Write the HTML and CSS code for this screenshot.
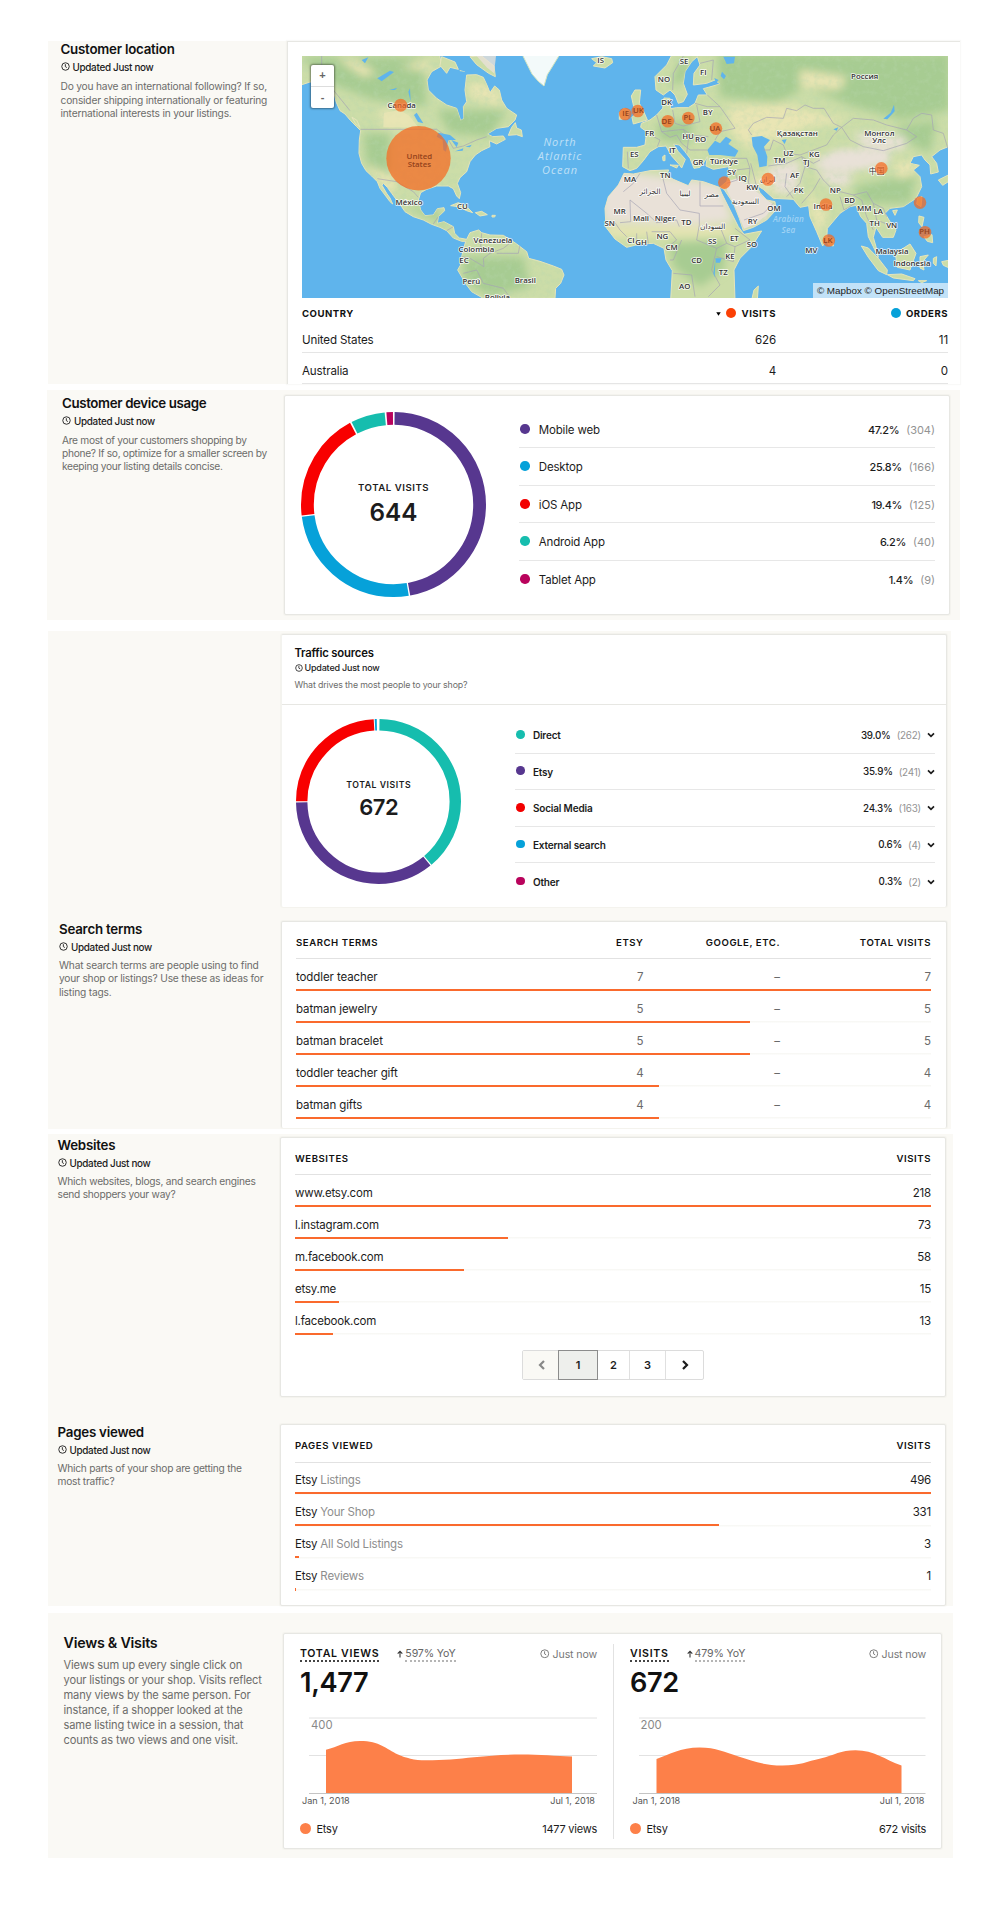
FILE: index.html
```html
<!DOCTYPE html>
<html lang="en">
<head>
<meta charset="utf-8">
<title>Shop stats</title>
<link rel="stylesheet" href="styles.css">
</head>
<body>
<svg class="defs" width="0" height="0" aria-hidden="true">
  <symbol id="clock" viewBox="0 0 12 12"><circle cx="6" cy="6" r="5" fill="none" stroke="currentColor" stroke-width="1.2"/><path d="M5.8 2.9V6.2L7.8 7.4" fill="none" stroke="currentColor" stroke-width="1.2"/></symbol>
  <symbol id="down" viewBox="0 0 8 6"><path d="M1 1.3L4 4.3L7 1.3" fill="none" stroke="currentColor" stroke-width="1.7"/></symbol>
  <symbol id="up" viewBox="0 0 6 8"><path d="M3 7.4V1.4M.7 3.6L3 1.3L5.3 3.6" fill="none" stroke="currentColor" stroke-width="1.1"/></symbol>
</svg>

<section class="panel location">
  <div class="side">
    <h2>Customer location</h2>
    <p class="updated"><svg><use href="#clock"/></svg>Updated Just now</p>
    <p class="about">Do you have an international following? If so,<br>consider shipping internationally or featuring<br>international interests in your listings.</p>
  </div>
  <div class="card">
    <div class="map">
      <svg viewBox="302 56 646 241.5" preserveAspectRatio="none">
        <defs>
          <path id="americas" d="M20 40L20 128L36 134L60 126L90 128L130 150L138 185L150 212L165 222L182 242L200 260L212 272L208 300L207 340L215 370L228 392L245 408L262 425L270 445L285 465L300 485L308 492L300 474L290 460L276 436L280 430L292 442L305 460L320 480L335 500L345 515L370 530L400 540L425 553L450 562L470 572L490 594L515 604L527 604L520 630L515 650L511 676L503 690L516 712L530 735L545 755L580 775L795 775L797 745L812 730L822 705L815 688L790 678L750 664L716 655L710 635L680 612L665 602L640 586L600 585L575 578L566 570L540 578L530 598L508 594L494 580L490 560L462 545L442 550L445 530L464 512L462 503L442 506L430 525L405 527L392 510L385 480L392 458L410 448L440 438L475 438L490 446L500 468L508 476L512 458L502 430L510 413L530 395L540 365L556 345L575 332L600 320L598 302L620 312L646 298L640 288L608 290L592 282L620 265L655 260L675 240L680 225L650 205L635 180L628 150L614 138L600 158L592 138L580 112L560 104L530 105L525 150L530 185L520 200L522 235L512 242L500 205L470 195L440 175L415 150L411 120L425 95L455 78L448 40Z"/>
          <path id="oldworld" d="M158 40L140 75L105 110L108 150L130 165L150 150L165 165L175 190L190 185L202 163L190 130L195 95L215 65L232 50L240 75L222 100L220 135L260 130L285 120L300 132L265 142L250 146L262 165L235 165L225 190L205 203L170 203L152 206L150 175L132 174L128 205L110 225L90 240L64 250L62 262L80 275L75 315L50 322L10 322L8 380L30 392L50 385L70 362L90 335L115 320L138 318L155 348L178 374L185 384L196 358L175 335L160 312L178 315L195 335L210 355L222 385L240 382L250 370L262 350L258 378L280 388L325 380L330 395L320 425L300 442L312 448L340 490L358 535L370 572L400 562L440 540L468 510L465 485L440 480L420 458L410 436L430 448L460 475L520 478L540 502L566 497L570 530L590 575L608 618L620 600L622 565L660 520L690 500L708 496L722 530L740 550L745 590L760 620L775 652L768 620L760 592L768 562L788 592L820 592L828 570L810 545L795 520L810 505L850 500L888 475L905 440L900 410L880 390L898 376L870 370L880 350L905 345L915 360L930 375L932 402L955 396L950 370L935 350L960 330L990 318L990 40Z"/>
          <path id="africa" d="M12 400L-5 435L-35 470L-45 505L-42 562L-15 597L20 622L60 612L100 610L132 625L138 660L157 692L152 780L345 780L342 690L360 655L395 620L425 573L372 583L355 560L330 510L305 460L298 442L250 425L215 420L205 437L160 418L140 405L146 390L90 392L40 402Z"/>
          <clipPath id="clip-a"><use href="#americas"/></clipPath>
          <clipPath id="clip-e"><use href="#oldworld"/></clipPath>
          <clipPath id="clip-f"><use href="#africa"/></clipPath>
          <filter id="soft" x="-20%" y="-20%" width="140%" height="140%"><feGaussianBlur stdDeviation="12"/></filter>
          <filter id="relief" x="0" y="0" width="100%" height="100%"><feTurbulence type="fractalNoise" baseFrequency=".06" numOctaves="4" seed="8"/><feColorMatrix values="0 0 0 0 .48  0 0 0 0 .68  0 0 0 0 .42  2.2 0 0 0 -.95"/></filter>
        </defs>
        <rect class="water" x="302" y="56" width="646" height="242"/>

        <g transform="translate(290 40) scale(.33333)">
          <use href="#americas" class="land"/>
          <g clip-path="url(#clip-a)">
            <g filter="url(#soft)">
              <path class="forest" d="M30 50L400 50L410 200L250 180L120 130Z M440 210L650 210L600 290L480 280Z M220 280L300 280L300 400L230 380Z"/>
              <path class="pale" d="M140 55L200 60L260 100L220 110Z M270 210L360 215L380 262L280 262Z M540 120L620 150L640 200L540 170Z M330 80L400 60L430 95Z M230 370L320 420L300 470Z"/>
              <path class="forest" d="M520 650L700 650L720 740L600 770L520 720Z M340 500L420 530L480 570L430 500Z"/>
            </g>
            <rect x="36" y="48" width="800" height="725" filter="url(#relief)" opacity=".4"/>
            <path class="pale" d="M282 218L330 210L358 228L385 262L280 262Z" opacity=".8"/>
            <path class="border" d="M95 48V80L130 150L180 212 M212 268H440L470 290L490 325L520 318L560 300L590 290 M262 416L320 425L345 440L370 455L385 472 M430 552L445 530 M470 572L490 560 M575 580L572 620L600 640L580 655L582 680L540 655L515 650 M600 640L640 625L665 605 M690 612L685 640L620 640 M520 700L560 690L580 730L640 745L660 772"/>
          </g>
          <path class="land" d="M655 286L665 262L676 248L680 264L694 270L697 290L680 284Z M482 497L505 488L530 500L548 518L530 512L505 500Z M556 518L575 514L592 524L570 528Z M606 526h10l-2 5h-8Z M540 50L575 48L612 78L616 110L596 100L560 74Z M455 50L495 66L505 88L480 82L470 100L450 76Z M510 92L525 96L518 108Z M186 232L200 240L210 262L196 250Z"/>
          <path class="dry" d="M560 48H618L612 100L590 82Z" opacity=".8"/>
          <path class="lake" d="M262 115L300 92L312 96L275 124Z M298 150L322 143L315 150Z M355 155L360 145L362 185Z M372 225L380 218L400 250L384 246Z M215 60L235 52L225 70Z M445 278L480 285L498 300L475 300L468 335L460 330L458 300L440 290Z M484 300L505 308L500 322Z M495 334L520 325L518 332Z M526 320L545 314L540 322Z M500 92L530 96L520 118Z"/>
          <path class="ice" d="M696 42L726 102L745 124L762 138L772 104L790 75L810 42Z"/>
          <path class="land" d="M905 56L935 50L965 56L968 68L945 84L910 78L920 68Z"/>
        </g>

        <g transform="translate(620 40) scale(.33333)">
          <use href="#oldworld" class="land"/>
          <use href="#africa" class="land"/>
          <g clip-path="url(#clip-e)">
            <g filter="url(#soft)">
              <path class="forest" d="M290 40L990 40L990 210L850 240L700 200L560 140L470 190L300 170Z M830 260L950 240L930 340L850 300Z M700 440L890 400L870 490L720 490Z"/>
              <path class="pale" d="M320 200L480 190L640 230L700 240L560 260L400 330L340 290Z M540 90L680 110L660 150L540 140Z M560 450L620 520L600 600L570 500Z M400 400L520 400L500 470L410 440Z"/>
              <path class="forest" d="M180 60L210 60L200 120L150 140Z M110 250L220 240L210 310L120 300Z"/>
              <path class="dry" d="M570 370L660 330L810 330L800 370L680 390Z M700 280L860 290L850 330L730 320Z M310 440L400 430L460 500L440 540L370 560Z M440 380L540 360L530 460L470 460Z M590 390L700 400L680 440L620 430Z"/>
              <path class="pale" d="M820 370L890 360L890 400L840 420Z"/>
            </g>
            <rect x="0" y="48" width="985" height="600" filter="url(#relief)" opacity=".35"/>
            <g filter="url(#soft)"><path class="dry" d="M585 375L650 340L800 335L800 365L700 385L620 392Z"/></g>
            <path class="dry" d="M318 425L352 415L390 440L415 460L438 478L462 495L440 525L400 555L372 566L350 510L322 452Z"/>
          </g>
          <g clip-path="url(#clip-f)">
            <g filter="url(#soft)">
              <path class="dry" d="M-60 420L20 395L300 430L340 545L230 555L-50 548Z"/>
              <path class="forest" d="M150 610L320 600L310 690L240 740L160 680Z"/>
              <path class="pale" d="M-40 560L340 560L340 585L-40 590Z"/>
            </g>
            <path class="border" d="M30 480L32 545L0 548 M30 480L80 520L110 548 M60 400L40 430L10 455 M125 400L140 460L180 510L238 520 M240 425V498H310 M238 520V555L230 600 M110 548L170 540L178 560 M-40 545L-15 548L0 570L20 590 M50 580V612 M80 575L85 612 M95 575L150 575L170 600L145 620 M230 600L290 625L320 610L300 560 M185 600L160 660H150 M290 625L275 690L300 735L265 770 M160 700L215 705L225 770 M320 610L345 620L340 665L290 650 M345 620L390 600L345 565"/>
          </g>
          <path class="land" d="M40 252L82 240L70 212L58 190L62 150L45 150L34 168L40 195L48 220L36 232Z M-2 238L22 236L28 212L12 205L-2 218Z M128 350L135 345V362H129Z M150 375L175 376L170 384Z M622 592L640 596L640 618L624 614Z M893 474L906 470L903 500L890 492Z M897 528L912 532L906 560L896 548Z M912 590L936 584L938 608L922 604Z M724 618L745 624L775 655L802 690L800 704L775 692L745 652Z M802 704L845 702L885 716L880 722L820 714Z M826 640L870 612L888 640L870 690L832 682Z M900 650L925 645L908 665L912 690L900 684Z M395 780L402 750L415 738L412 780Z M818 512L832 510L825 526Z M955 420L985 405V425L968 436Z M895 722H920L905 728Z M940 655L950 650L948 678L940 670Z M965 665L990 660V685L970 676Z"/>
          <path class="lake" d="M262 330L285 302L300 310L318 290L335 300L325 312L355 332L345 350L300 345L268 345Z M395 292L425 288L450 300L432 320L442 350L440 378L418 382L412 345L398 318Z M485 300L500 298L494 312Z M790 236L812 218L822 194L824 214L802 238Z M283 114L296 120L288 130Z M306 95L318 108L312 118L302 108Z M310 50L345 50L342 70L320 72Z M286 655L305 655L300 668L288 668Z M286 660L280 700L284 712Z M640 268L655 262L650 272Z"/>
          <path class="border" d="M190 48L160 100L158 150 M240 70L280 60L275 120 M262 165L300 200L345 265L300 275L285 300 M225 190L262 200L300 200 M158 210L165 250L190 258L240 245L230 195 M110 225L125 275L190 268L215 285L265 290 M78 278L120 300L112 320 M125 275L150 292L170 285L185 310L210 330L262 330 M190 268L205 300L200 340 M22 335L25 385 M335 355L380 355L390 385L330 392 M345 395L352 420L320 430 M390 385L385 430L412 445 M392 370L410 440 M395 285L385 270L400 250L440 232L490 235L500 205L530 212L555 195L580 205L612 205L640 250L665 262L640 285L620 315L580 330L540 345L500 340L490 315L460 300L450 330L430 330 M665 262L700 235L760 240L800 255L860 270L890 290L860 310L790 332L730 320L690 300L665 262 M860 270L880 235L905 220L935 225L940 270L970 280L985 330 M445 378L500 370L545 350L555 380L590 390L610 420L640 450L700 465L740 455 M545 350L580 370L600 360 M500 400L495 440L520 475 M555 380L540 430L500 470 M600 415L580 450L545 490 M660 470L672 510L705 490 M700 465L725 480L740 530L760 570 M740 455L760 490L790 505L800 530 M760 490L770 540L820 560 M372 540L430 520L460 490"/>
        </g>

        <g class="names" transform="translate(290 40) scale(.33333)">
          <text x="335" y="203">Canada</text><text x="357" y="494">México</text><text x="517" y="508">CU</text><text x="609" y="610">Venezuela</text><text x="559" y="636">Colombia</text><text x="522" y="670">EC</text><text x="544" y="733">Perú</text><text x="706" y="728">Brasil</text><text x="622" y="779">Bolivia</text><text x="932" y="70">IS</text><text x="989" y="523">MR</text><text x="959" y="557">SN</text>
        </g>
        <g class="names" transform="translate(620 40) scale(.33333)">
          <text x="192" y="71">SE</text><text x="250" y="104">FI</text><text x="132" y="127">NO</text><text x="140" y="196">DK</text><text x="263" y="225">BY</text><text x="89" y="287">FR</text><text x="204" y="296">HU</text><text x="242" y="307">RO</text><text x="157" y="338">IT</text><text x="43" y="351">ES</text><text x="234" y="375">GR</text><text x="312" y="371">Türkiye</text><text x="335" y="406">SY</text><text x="368" y="423">IQ</text><text x="136" y="413">TN</text><text x="30" y="427">MA</text><text x="397" y="451">KW</text><text x="734" y="116">Россия</text><text x="532" y="287">Қазақстан</text><text x="778" y="287">Монгол</text><text x="777" y="308">Улс</text><text x="505" y="347">UZ</text><text x="583" y="350">KG</text><text x="479" y="369">TM</text><text x="559" y="375">TJ</text><text x="524" y="414">AF</text><text x="536" y="460">PK</text><text x="646" y="459">NP</text><text x="689" y="489">BD</text><text x="733" y="513">MM</text><text x="775" y="522">LA</text><text x="764" y="557">TH</text><text x="815" y="563">VN</text><text x="609" y="506">India</text><text x="770" y="402" class="cjk">中国</text><text x="462" y="512">OM</text><text x="398" y="551">RY</text><text x="63" y="542">Mali</text><text x="135" y="542">Niger</text><text x="199" y="555">TD</text><text x="127" y="596">NG</text><text x="33" y="608">CI</text><text x="63" y="615">GH</text><text x="155" y="629">CM</text><text x="277" y="612">SS</text><text x="343" y="602">ET</text><text x="396" y="622">SO</text><text x="330" y="658">KE</text><text x="230" y="670">CD</text><text x="310" y="705">TZ</text><text x="194" y="746">AO</text><text x="574" y="640">MV</text><text x="816" y="641">Malaysia</text><text x="876" y="679">Indonesia</text>
          <g class="arabic"><text x="90" y="462">الجزائر</text><text x="195" y="468">ليبيا</text><text x="275" y="472">مصر</text><text x="376" y="492">السعودية</text><text x="278" y="566">السودان</text><text x="443" y="425">ایران</text></g>
        </g>
        <g class="sea"><text x="560" y="145.5">North</text><text x="560" y="159.7">Atlantic</text><text x="560" y="174">Ocean</text></g>
        <g class="sea small"><text x="788.5" y="222">Arabian</text><text x="788.5" y="233">Sea</text></g>
        <g class="bubbles">
          <circle cx="418.5" cy="158.3" r="32.2"/><circle cx="400.7" cy="105.2" r="6.5"/>
          <circle cx="625.3" cy="114" r="6.3"/><circle cx="637.8" cy="111" r="6.3"/><circle cx="667.8" cy="121.3" r="6.3"/><circle cx="688.3" cy="118" r="6.3"/><circle cx="716" cy="128.6" r="6.3"/><circle cx="724.3" cy="182.6" r="6.3"/><circle cx="768" cy="179.3" r="6.5"/><circle cx="826" cy="204.5" r="6.3"/><circle cx="881.3" cy="168.4" r="6.3"/><circle cx="920" cy="202.6" r="6.3"/><circle cx="925" cy="232.3" r="6.3"/><circle cx="828.8" cy="240.5" r="6.3"/>
        </g>
        <g class="names tinted" transform="translate(290 40) scale(.33333)"><text x="388" y="357">United</text><text x="388" y="380">States</text></g>
        <g class="names tinted" transform="translate(620 40) scale(.33333)"><text x="17" y="228">IE</text><text x="55" y="218">UK</text><text x="140" y="252">DE</text><text x="204" y="241">PL</text><text x="285" y="273">UA</text><text x="624" y="609">LK</text><text x="914" y="582">PH</text></g>
      </svg>
      <div class="zoomer"><span>+</span><span>-</span></div>
      <div class="credit">© Mapbox © OpenStreetMap</div>
    </div>
    <div class="trow thead"><span>COUNTRY</span><span class="num"><svg class="sort" viewBox="0 0 6 4"><path d="M.3 0H5.7L3 4Z"/></svg><i class="dot orange"></i>VISITS</span><span class="num"><i class="dot blue"></i>ORDERS</span></div>
    <div class="trow first"><span>United States</span><span class="num">626</span><span class="num">11</span></div>
    <div class="trow second"><span>Australia</span><span class="num">4</span><span class="num">0</span></div>
  </div>
</section>

<section class="panel device">
  <div class="side">
    <h2>Customer device usage</h2>
    <p class="updated"><svg><use href="#clock"/></svg>Updated Just now</p>
    <p class="about">Are most of your customers shopping by<br>phone? If so, optimize for a smaller screen by<br>keeping your listing details concise.</p>
  </div>
  <div class="card">
    <div class="donut">
      <svg viewBox="0 0 185 185"><g fill="none" stroke-width="12.8" transform="rotate(-90 92.5 92.5)">
        <circle class="s-purple" cx="92.5" cy="92.5" r="86.1" pathLength="1000" stroke-dasharray="469 531" stroke-dashoffset="-2"/>
        <circle class="s-blue" cx="92.5" cy="92.5" r="86.1" pathLength="1000" stroke-dasharray="255 745" stroke-dashoffset="-473.5"/>
        <circle class="s-red" cx="92.5" cy="92.5" r="86.1" pathLength="1000" stroke-dasharray="191 809" stroke-dashoffset="-731"/>
        <circle class="s-teal" cx="92.5" cy="92.5" r="86.1" pathLength="1000" stroke-dasharray="59.5 940.5" stroke-dashoffset="-925"/>
        <circle class="s-pink" cx="92.5" cy="92.5" r="86.1" pathLength="1000" stroke-dasharray="11.5 988.5" stroke-dashoffset="-987.5"/>
      </g></svg>
      <div class="total"><span>TOTAL VISITS</span><b>644</b></div>
    </div>
    <ul class="legend">
      <li><i class="dot purple"></i><span>Mobile web</span><b>47.2%</b><em>(304)</em></li>
      <li><i class="dot blue"></i><span>Desktop</span><b>25.8%</b><em>(166)</em></li>
      <li><i class="dot red"></i><span>iOS App</span><b>19.4%</b><em>(125)</em></li>
      <li><i class="dot teal"></i><span>Android App</span><b>6.2%</b><em>(40)</em></li>
      <li><i class="dot pink"></i><span>Tablet App</span><b>1.4%</b><em>(9)</em></li>
    </ul>
  </div>
</section>

<section class="panel sources">
  <div class="card traffic">
    <header>
      <h2>Traffic sources</h2>
      <p class="updated"><svg><use href="#clock"/></svg>Updated Just now</p>
      <p class="about">What drives the most people to your shop?</p>
    </header>
    <div class="body">
      <div class="donut">
        <svg viewBox="0 0 165 165"><g fill="none" stroke-width="11.4" transform="rotate(-90 82.5 82.5)">
          <circle class="s-teal" cx="82.5" cy="82.5" r="76.8" pathLength="1000" stroke-dasharray="387 613" stroke-dashoffset="-2"/>
          <circle class="s-purple" cx="82.5" cy="82.5" r="76.8" pathLength="1000" stroke-dasharray="356.5 643.5" stroke-dashoffset="-391.5"/>
          <circle class="s-red" cx="82.5" cy="82.5" r="76.8" pathLength="1000" stroke-dasharray="240 760" stroke-dashoffset="-750.5"/>
          <circle class="s-blue" cx="82.5" cy="82.5" r="76.8" pathLength="1000" stroke-dasharray="4 996" stroke-dashoffset="-992.5"/>
        </g></svg>
        <div class="total"><span>TOTAL VISITS</span><b>672</b></div>
      </div>
      <ul class="legend">
        <li><i class="dot teal"></i><span>Direct</span><b>39.0%</b><em>(262)</em><svg><use href="#down"/></svg></li>
        <li><i class="dot purple"></i><span>Etsy</span><b>35.9%</b><em>(241)</em><svg><use href="#down"/></svg></li>
        <li><i class="dot red"></i><span>Social Media</span><b>24.3%</b><em>(163)</em><svg><use href="#down"/></svg></li>
        <li><i class="dot blue"></i><span>External search</span><b>0.6%</b><em>(4)</em><svg><use href="#down"/></svg></li>
        <li><i class="dot pink"></i><span>Other</span><b>0.3%</b><em>(2)</em><svg><use href="#down"/></svg></li>
      </ul>
    </div>
  </div>
  <div class="split terms">
    <div class="side">
      <h2>Search terms</h2>
      <p class="updated"><svg><use href="#clock"/></svg>Updated Just now</p>
      <p class="about">What search terms are people using to find<br>your shop or listings? Use these as ideas for<br>listing tags.</p>
    </div>
    <div class="card bars">
      <div class="bhead"><span>SEARCH TERMS</span><span>ETSY</span><span>GOOGLE, ETC.</span><span>TOTAL VISITS</span></div>
      <div class="brow"><p><span>toddler teacher</span><span>7</span><span>–</span><span>7</span></p><i style="width:100%"></i></div>
      <div class="brow"><p><span>batman jewelry</span><span>5</span><span>–</span><span>5</span></p><i style="width:71.43%"></i></div>
      <div class="brow"><p><span>batman bracelet</span><span>5</span><span>–</span><span>5</span></p><i style="width:71.43%"></i></div>
      <div class="brow"><p><span>toddler teacher gift</span><span>4</span><span>–</span><span>4</span></p><i style="width:57.14%"></i></div>
      <div class="brow"><p><span>batman gifts</span><span>4</span><span>–</span><span>4</span></p><i style="width:57.14%"></i></div>
    </div>
  </div>
</section>

<section class="panel visits">
  <div class="split websites">
    <div class="side">
      <h2>Websites</h2>
      <p class="updated"><svg><use href="#clock"/></svg>Updated Just now</p>
      <p class="about">Which websites, blogs, and search engines<br>send shoppers your way?</p>
    </div>
    <div class="card bars">
      <div class="bhead"><span>WEBSITES</span><span>VISITS</span></div>
      <div class="brow"><p><span>www.etsy.com</span><span>218</span></p><i style="width:100%"></i></div>
      <div class="brow"><p><span>l.instagram.com</span><span>73</span></p><i style="width:33.5%"></i></div>
      <div class="brow"><p><span>m.facebook.com</span><span>58</span></p><i style="width:26.6%"></i></div>
      <div class="brow"><p><span>etsy.me</span><span>15</span></p><i style="width:6.9%"></i></div>
      <div class="brow"><p><span>l.facebook.com</span><span>13</span></p><i style="width:5.95%"></i></div>
      <nav class="pager">
        <span class="prev"><svg viewBox="0 0 8 10"><path d="M6 1L2 5L6 9"/></svg></span><span class="on">1</span><span>2</span><span>3</span><span class="next"><svg viewBox="0 0 8 10"><path d="M2 1L6 5L2 9"/></svg></span>
      </nav>
    </div>
  </div>
  <div class="split pages">
    <div class="side">
      <h2>Pages viewed</h2>
      <p class="updated"><svg><use href="#clock"/></svg>Updated Just now</p>
      <p class="about">Which parts of your shop are getting the<br>most traffic?</p>
    </div>
    <div class="card bars">
      <div class="bhead"><span>PAGES VIEWED</span><span>VISITS</span></div>
      <div class="brow"><p><span>Etsy <em>Listings</em></span><span>496</span></p><i style="width:100%"></i></div>
      <div class="brow"><p><span>Etsy <em>Your Shop</em></span><span>331</span></p><i style="width:66.7%"></i></div>
      <div class="brow"><p><span>Etsy <em>All Sold Listings</em></span><span>3</span></p><i style="width:.6%"></i></div>
      <div class="brow"><p><span>Etsy <em>Reviews</em></span><span>1</span></p><i style="width:.2%"></i></div>
    </div>
  </div>
</section>

<section class="panel overview">
  <div class="side">
    <h2>Views &amp; Visits</h2>
    <p class="about">Views sum up every single click on<br>your listings or your shop. Visits reflect<br>many views by the same person. For<br>instance, if a shopper looked at the<br>same listing twice in a session, that<br>counts as two views and one visit.</p>
  </div>
  <div class="card">
    <div class="metric">
      <div class="mhead"><b>TOTAL VIEWS</b><svg class="up"><use href="#up"/></svg><u>597% YoY</u><span class="when"><svg><use href="#clock"/></svg>Just now</span></div>
      <div class="big">1,477</div>
      <svg class="chart" viewBox="300 1714 297 96">
        <path class="grid" d="M309 1719H597M309 1756.5H597"/>
        <path class="area" d="M326 1794V1750.7C338 1748 345 1742 360 1742C380 1742 386 1750 398 1755.5C406 1759 414 1761.3 426 1761.3C444 1761.3 458 1760 474 1758.3C490 1756.5 505 1755.5 521 1755.5C540 1755.5 556 1757 572 1757.5V1794Z"/>
        <path class="axis" d="M309 1794.5H597"/>
        <text class="lim" x="311" y="1730">400</text><text x="302" y="1805">Jan 1, 2018</text><text x="595" y="1805" text-anchor="end">Jul 1, 2018</text>
      </svg>
      <div class="foot"><i class="dot coral"></i>Etsy<span>1477 views</span></div>
    </div>
    <div class="metric">
      <div class="mhead"><b>VISITS</b><svg class="up"><use href="#up"/></svg><u>479% YoY</u><span class="when"><svg><use href="#clock"/></svg>Just now</span></div>
      <div class="big">672</div>
      <svg class="chart" viewBox="630 1714 296 96">
        <path class="grid" d="M638.5 1719H925M638.5 1756.5H925"/>
        <path class="area" d="M656 1794V1760C668 1756 680 1748.6 699 1748.6C716 1748.6 724 1753.5 738 1757.5C752 1761.5 762 1766.5 782 1766.5C800 1766.5 806 1762.5 820 1759.5C834 1756 840 1751.2 855 1751.2C874 1751.2 884 1760.5 901 1766.5V1794Z"/>
        <path class="axis" d="M638.5 1794.5H925"/>
        <text class="lim" x="640" y="1730">200</text><text x="632" y="1805">Jan 1, 2018</text><text x="924" y="1805" text-anchor="end">Jul 1, 2018</text>
      </svg>
      <div class="foot"><i class="dot coral"></i>Etsy<span>672 visits</span></div>
    </div>
  </div>
</section>
</body>
</html>
```
FILE: styles.css
```css
* { box-sizing: border-box; margin: 0; padding: 0; }
body { width: 1000px; height: 1909px; padding-top: 41px; background: #fff; color: #1c1c1c; font-family: Inter, "Liberation Sans", sans-serif; overflow: hidden; }
.defs { position: absolute; }
i, em { font-style: normal; }
li { list-style: none; }

.panel, .split { display: flex; align-items: flex-start; }
.panel { margin-left: 47.5px; background: #faf9f5; }
.side { flex: none; }
.card { background: #fff; border: 1px solid #e7e7e3; border-radius: 2px; box-shadow: 0 0 1px 1px rgba(60, 60, 40, .03); }

h2 { font-size: 13.3px; line-height: 18px; font-weight: 600; letter-spacing: -.22px; color: #111; }
.updated { display: flex; align-items: center; margin-top: 1.5px; font-size: 9.9px; line-height: 14px; font-weight: 500; letter-spacing: -.3px; color: #1c1c1c; }
.updated svg { width: 9px; height: 9px; margin-right: 3px; }
.about { margin-top: 5.7px; font-size: 10.2px; line-height: 13.3px; letter-spacing: -.19px; color: #6c6c6a; white-space: nowrap; }

.dot { display: inline-block; flex: none; width: 10px; height: 10px; border-radius: 50%; }
.orange { background: #fb4005; }
.blue { background: #06a1d9; }
.purple { background: #57378f; }
.red { background: #f20000; }
.teal { background: #16bdae; }
.pink { background: #b9035c; }
.coral { background: #fd8049; }
.s-blue { stroke: #06a1d9; }
.s-purple { stroke: #57378f; }
.s-red { stroke: #f80000; }
.s-teal { stroke: #16bdae; }
.s-pink { stroke: #b9035c; }

/* customer location */
.location { width: 912px; height: 343px; }
.location .side { width: 239px; padding-left: 13px; margin-top: -.6px; }
.location .about { margin-top: 6.4px; }
.location .card { width: 673px; height: 343px; padding: 14px 0 0 14.5px; border-width: 1px 0 0 1px; border-radius: 0; }
.map { position: relative; width: 646px; height: 241.5px; overflow: hidden; }
.map > svg { display: block; width: 646px; height: 241.5px; }
.water, .lake { fill: #5fb4ec; }
.land { fill: #ccdda8; stroke: #e6e5bb; stroke-width: 3; }
.forest { fill: #a7cc92; }
.pale { fill: #e9e5b4; }
.dry { fill: #e9e1d8; }
.ice { fill: #f3fafa; stroke: #d5e5c0; stroke-width: 3; }
.border { fill: none; stroke: #a5a3b4; stroke-width: 2; stroke-linejoin: round; }
.names text { font: 600 23.5px "Open Sans", "DejaVu Sans", sans-serif; fill: #333; text-anchor: middle; stroke: rgba(255, 255, 255, .85); stroke-width: 5; stroke-linejoin: round; paint-order: stroke; }
.names .cjk { font-family: "Noto Sans CJK SC", sans-serif; font-weight: 400; }
.names .arabic text { font-family: "DejaVu Sans", sans-serif; font-weight: 400; font-size: 22px; }
.names.tinted text { fill: #93421c; stroke: none; }
.sea text { font: italic 11px "Open Sans", sans-serif; letter-spacing: 1px; fill: #bfe0f7; text-anchor: middle; }
.sea.small text { font-size: 8.2px; letter-spacing: .2px; font-weight: 600; fill: #a0d3f4; }
.bubbles circle { fill: #f7681f; fill-opacity: .72; }
.zoomer { position: absolute; left: 9px; top: 9px; width: 23px; height: 43px; display: flex; flex-direction: column; background: #fff; border-radius: 2px; box-shadow: 0 0 2px 1px rgba(0, 0, 0, .4); }
.zoomer span { flex: 1; font: 700 11px/20px "Liberation Sans", sans-serif; text-align: center; color: #666; }
.zoomer span + span { border-top: 1px solid #ddd; }
.credit { position: absolute; right: 0; bottom: 0; width: 135px; height: 15px; font: 9.85px/15px "Liberation Sans", sans-serif; text-align: center; white-space: nowrap; color: #222; background: rgba(255, 255, 255, .62); }

.trow { display: grid; grid-template-columns: 1fr 120px 172px; align-items: center; width: 646px; font-size: 11.6px; letter-spacing: -.15px; border-bottom: 1px solid #e5e5e5; }
.trow .num { display: flex; align-items: center; justify-content: flex-end; }
.thead { height: 31.5px; border: 0; font-size: 9.6px; font-weight: 700; letter-spacing: .5px; color: #111; }
.thead .dot { margin-right: 5px; }
.thead .sort { width: 5px; height: 4px; margin: 2px 5px 0 0; }
.first { height: 24px; padding-bottom: 2px; }
.second { height: 31px; padding-top: 5px; }

/* device usage */
.device { width: 913px; height: 229.5px; margin: 6px 0 0 47px; }
.device .side { width: 237px; padding: 4px 0 0 15px; }
.device h2 { letter-spacing: -.36px; }
.device .about { letter-spacing: -.3px; margin-top: 6px; }
.device .card { display: flex; width: 666px; height: 220.5px; margin-top: 4.5px; padding: 15px 14px 0 16px; }
.donut { position: relative; flex: none; }
.donut svg { display: block; width: 100%; height: 100%; }
.total { position: absolute; inset: 0; display: flex; flex-direction: column; align-items: center; justify-content: center; padding-bottom: 2px; }
.total span { font-size: 9.6px; line-height: 14px; font-weight: 600; letter-spacing: .55px; }
.total b { margin-top: 2px; font-size: 24.3px; line-height: 30px; font-weight: 600; }
.device .donut { width: 185px; height: 185px; margin-top: 1.8px; }
.legend { flex: 1; }
.device .legend { margin-left: 33.2px; }
.legend li { display: flex; align-items: center; height: 37.5px; padding-top: 2px; border-bottom: 1px solid #e7e7e7; font-size: 11.5px; letter-spacing: -.17px; }
.legend li:last-child { border: 0; }
.legend .dot { width: 9.6px; height: 9.6px; margin: 0 9px 2px 1px; }
.legend span { flex: 1; }
.legend b { font-size: 10.9px; font-weight: 500; letter-spacing: -.33px; }
.legend em { margin-left: 7px; font-size: 11px; letter-spacing: 0; color: #939393; }

/* traffic sources + search terms */
.sources { flex-direction: column; width: 903px; height: 497.5px; margin-top: 11.5px; }
.traffic { width: 666px; height: 273px; margin: 3.3px 0 0 233.5px; border-width: 1px 1px 0; border-left-color: #f3f3ef; }
.traffic header { height: 69.7px; padding: 9.5px 0 0 12.5px; border-bottom: 1px solid #e7e7e3; }
.traffic h2 { font-size: 11.3px; line-height: 16px; letter-spacing: -.2px; }
.traffic .updated { margin-top: .8px; font-size: 9px; line-height: 12px; letter-spacing: -.2px; }
.traffic .updated svg { width: 8px; height: 8px; margin-right: 2px; }
.traffic .about { margin-top: 5px; font-size: 8.8px; line-height: 12px; letter-spacing: -.13px; }
.traffic .body { display: flex; padding: 12px 11px 0 14.2px; }
.traffic .donut { width: 165px; height: 165px; margin-top: 2px; }
.traffic .total { padding-bottom: 4px; }
.traffic .total span { font-size: 8.7px; line-height: 12px; }
.traffic .total b { margin-top: 2.5px; font-size: 22px; line-height: 26px; letter-spacing: -.5px; }
.traffic .legend { margin-left: 54px; }
.traffic li { height: 36.55px; padding-top: 1px; font-size: 10px; font-weight: 600; letter-spacing: -.17px; }
.traffic .legend .dot { width: 8.7px; height: 8.7px; margin-right: 8px; }
.traffic .legend b { font-size: 9.8px; letter-spacing: -.22px; }
.traffic .legend em { font-size: 9.9px; font-weight: 400; margin-left: 6px; letter-spacing: -.2px; }
.legend li svg { width: 8px; height: 6px; margin-left: 6px; }

.terms { margin-top: 13.5px; }
.terms .side { width: 233.5px; padding-left: 11.5px; margin-top: -.8px; }
.bars { padding: 0 14px; width: 666px; }
.bhead { display: flex; align-items: center; justify-content: space-between; height: 37.5px; padding-top: 4.5px; border-bottom: 1px solid #e2e2e2; font-size: 9.6px; font-weight: 600; letter-spacing: .55px; color: #111; }
.brow { height: 32.05px; display: flex; flex-direction: column; background: linear-gradient(#f8f8f5, #f8f8f5) 0 30px / 100% 1.5px no-repeat; }
.brow p { display: flex; align-items: center; justify-content: space-between; height: 29.5px; padding-top: 6px; font-size: 11.5px; letter-spacing: -.1px; }
.brow i { height: 2.4px; background: #fa6a2d; }
.brow em { color: #8d8d8d; }
.terms .card { height: 207px; padding-right: 15px; border-bottom: 0; }
.terms .bhead, .terms .brow p { display: grid; grid-template-columns: 1fr 120px 136.5px 151px; }
.terms .bhead span + span, .terms .brow span + span { text-align: right; }
.terms .brow span + span { color: #6a6a6a; }

/* websites + pages viewed */
.visits { flex-direction: column; width: 905px; height: 472.5px; margin-top: 5px; }
.visits .side { width: 232.5px; padding-left: 10px; }
.visits .about { letter-spacing: -.25px; }
.visits .brow p { letter-spacing: -.2px; }
.websites { margin-top: 3px; }
.websites .side { margin-top: -.5px; }
.websites .card { height: 260px; }
.pages { margin-top: 27.5px; }
.pages .side { margin-top: -1px; }
.pages .card { height: 182px; }
.pager { display: flex; width: 182px; height: 30px; margin: 14.5px auto 0; border: 1px solid #dcdcdc; border-radius: 2px; font-size: 11px; font-weight: 600; }
.pager span { display: flex; align-items: center; justify-content: center; flex: 0 0 36px; border-left: 1px solid #e0e0e0; }
.pager .prev { flex-basis: 35px; border: 0; background: #faf9f5; color: #888; padding-left: 3px; }
.pager .on { flex-basis: 40px; margin: -1px 0; border: 1px solid #8c8c8c; background: #eeefec; }
.pager .on + span { flex-basis: 31px; border: 0; }
.pager .next { flex: 1; }
.pager svg { width: 8px; height: 10px; fill: none; stroke: currentColor; stroke-width: 2.2; }

/* views & visits */
.overview { width: 905px; height: 245px; margin-top: 7px; }
.overview .side { width: 235.5px; padding: 19.5px 0 0 16px; }
.overview h2 { font-size: 14.3px; letter-spacing: -.25px; line-height: 20px; }
.overview .about { margin-top: 5.5px; font-size: 11.1px; line-height: 15.1px; letter-spacing: -.14px; }
.overview .card { display: flex; width: 659px; height: 216px; margin-top: 19.5px; padding: 10.5px 0 9px; }
.metric { width: 329px; padding: 2px 16px 0 16px; }
.metric + .metric { flex: 1; border-left: 1px solid #e2e2e2; }
.mhead { display: flex; align-items: center; height: 16px; font-size: 10.6px; letter-spacing: -.13px; color: #666; }
.mhead b { font-size: 10.6px; line-height: 13px; font-weight: 600; letter-spacing: .7px; color: #111; border-bottom: 2px dotted #444; }
.mhead u { line-height: 13px; text-decoration: none; border-bottom: 2px dotted #b5b5b5; }
.mhead .up { width: 6px; height: 8px; margin: 0 2px 0 18px; color: #333; }
.when { display: flex; align-items: center; margin-left: auto; color: #777; }
.when svg { width: 9.5px; height: 9.5px; margin-right: 3px; }
.big { margin-top: 5px; font-size: 27.2px; line-height: 32px; font-weight: 600; letter-spacing: -.35px; color: #111; }
.chart { display: block; width: 297px; height: 96px; margin-top: 14px; }
.chart text { font-size: 9.1px; fill: #555; }
.chart .lim { font-size: 11.3px; fill: #888; }
.grid { stroke: #e2e2e2; }
.axis { stroke: #c4c4c4; }
.area { fill: #fd8049; }
.foot { display: flex; align-items: center; margin-top: 10px; font-size: 11px; line-height: 20px; letter-spacing: -.25px; }
.foot .dot { width: 11px; height: 11px; margin: 0 5.5px 2px 0; }
.foot span { margin-left: auto; }
```
